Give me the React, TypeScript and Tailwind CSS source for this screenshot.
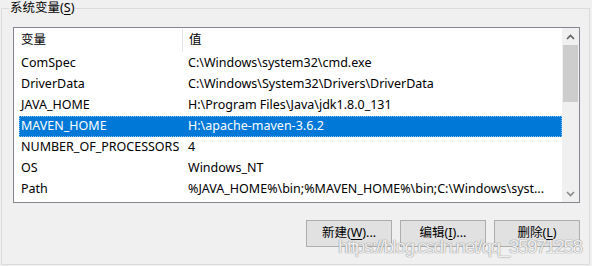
const rows: [string, string][] = [
  ['ComSpec', 'C:\\Windows\\system32\\cmd.exe'],
  ['DriverData', 'C:\\Windows\\System32\\Drivers\\DriverData'],
  ['JAVA_HOME', 'H:\\Program Files\\Java\\jdk1.8.0_131'],
  ['MAVEN_HOME', 'H:\\apache-maven-3.6.2'],
  ['NUMBER_OF_PROCESSORS', '4'],
  ['OS', 'Windows_NT'],
  ['Path', '%JAVA_HOME%\\bin;%MAVEN_HOME%\\bin;C:\\Windows\\syst...'],
]

const SELECTED = 3

function Chevron({ up, color }: { up?: boolean; color: string }) {
  return (
    <svg width="9" height="6" viewBox="0 0 9 6">
      <path
        d={up ? 'M1 5 L4.5 1.5 L8 5' : 'M1 1 L4.5 4.5 L8 1'}
        fill="none"
        stroke={color}
        strokeWidth="1.6"
      />
    </svg>
  )
}

function Btn({ label, hot, rest }: { label: string; hot: string; rest?: string }) {
  return (
    <button className="w-[86px] h-[27px] border border-[#adadad] bg-[#e1e1e1] text-[12.5px] text-black flex items-center justify-center">
      {label}(<span className="underline underline-offset-2">{hot}</span>){rest}
    </button>
  )
}

export default function App() {
  return (
    <div className="relative w-[592px] h-[266px] bg-[#f0f0f0] font-['Noto_Sans','Noto_Sans_CJK_SC',sans-serif] text-[12.5px] text-black overflow-hidden">
      <div className="pt-[8px] pl-[1px]">
        {/* group box */}
        <div className="w-[589px] h-[257px] border border-[#dcdcdc]">
          <div className="-mt-[9px] ml-[7px] w-fit bg-[#f0f0f0] px-[1px] leading-[16px]">
            系统变量(<span className="underline underline-offset-2">S</span>)
          </div>

          {/* list view */}
          <div className="ml-[11px] mt-[11px] w-[567px] h-[176px] border border-[#828790] bg-white flex">
            <div className="flex-1 flex flex-col">
              <div className="h-[25px] flex items-center">
                <div className="w-[169px] pl-[7px] h-[23px] flex items-center border-r border-[#e5e5e5]">变量</div>
                <div className="pl-[6px]">值</div>
              </div>
              {rows.map(([name, value], i) => (
                <div
                  key={name}
                  className={
                    i === SELECTED
                      ? 'ml-[5px] h-[21px] flex items-center bg-[#0078d7] text-white border border-dotted border-[#8cc0ee]'
                      : 'ml-[5px] h-[21px] flex items-center border border-transparent'
                  }
                >
                  <div className="w-[168px] pl-[1px] whitespace-nowrap">{name}</div>
                  <div className="whitespace-nowrap">{value}</div>
                </div>
              ))}
            </div>

            {/* scrollbar */}
            <div className="w-[17px] bg-[#f0f0f0] flex flex-col">
              <div className="h-[17px] flex items-center justify-center">
                <Chevron up color="#606060" />
              </div>
              <div className="mx-[1px] h-[57px] bg-[#cdcdcd]" />
              <div className="flex-1" />
              <div className="h-[17px] flex items-center justify-center">
                <Chevron color="#8a8a8a" />
              </div>
            </div>
          </div>

          <div className="mt-[17px] mr-[9px] flex justify-end gap-[8px]">
            <Btn label="新建" hot="W" rest="..." />
            <Btn label="编辑" hot="I" rest="..." />
            <Btn label="删除" hot="L" />
          </div>
        </div>
      </div>

      {/* watermark */}
      <div className="absolute left-[338px] top-[236px] font-['Liberation_Sans',sans-serif] text-[19px] leading-[22px] tracking-[-1.45px] text-white/85 [text-shadow:0_0_1px_#8a8a8a,0_0_1px_#8a8a8a] whitespace-nowrap pointer-events-none">
        https://blog.csdn.net/qq_35971258
      </div>
    </div>
  )
}
